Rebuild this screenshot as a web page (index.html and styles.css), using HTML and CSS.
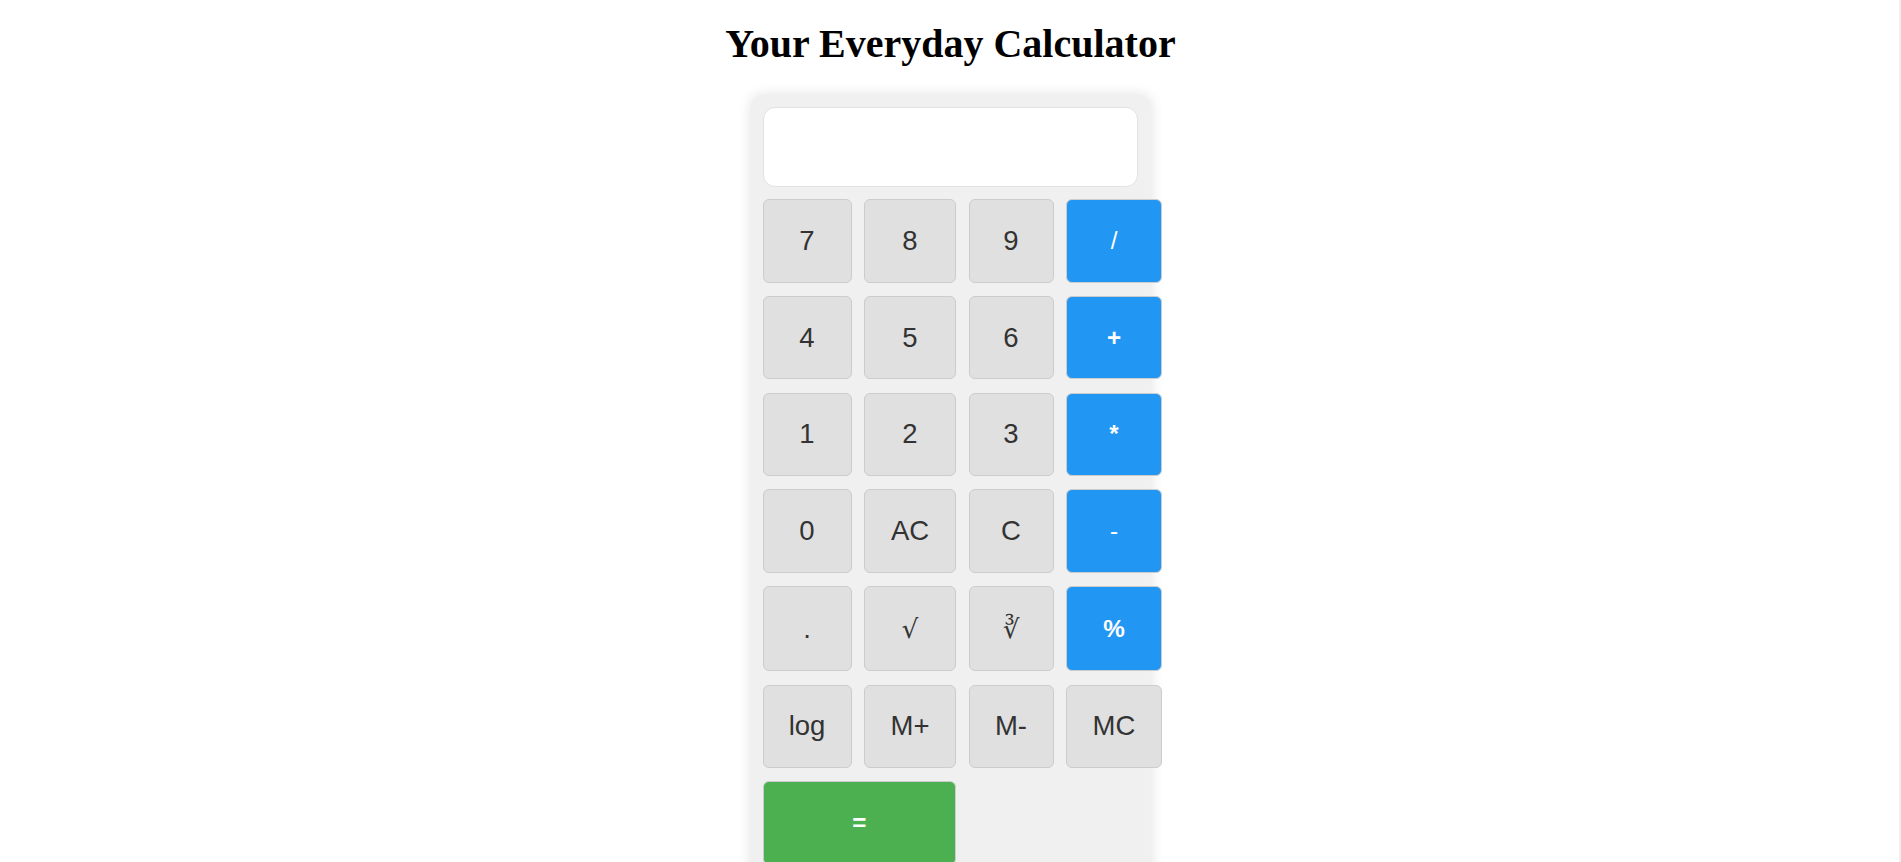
FILE: index.html
```html
<!DOCTYPE html>
<html lang="en">
<head>
<meta charset="utf-8">
<title>Your Everyday Calculator</title>
<link rel="stylesheet" href="styles.css">
</head>
<body>
<h1 class="title">Your Everyday Calculator</h1>
<div class="calculator">
  <div class="display"></div>
  <div class="keys">
    <button class="key">7</button>
    <button class="key">8</button>
    <button class="key">9</button>
    <button class="key op thin">/</button>
    <button class="key">4</button>
    <button class="key">5</button>
    <button class="key">6</button>
    <button class="key op">+</button>
    <button class="key">1</button>
    <button class="key">2</button>
    <button class="key">3</button>
    <button class="key op">*</button>
    <button class="key">0</button>
    <button class="key">AC</button>
    <button class="key">C</button>
    <button class="key op thin">-</button>
    <button class="key">.</button>
    <button class="key sym">&#8730;</button>
    <button class="key sym">&#8731;</button>
    <button class="key op">%</button>
    <button class="key">log</button>
    <button class="key">M+</button>
    <button class="key">M-</button>
    <button class="key">MC</button>
    <button class="key eq">=</button>
  </div>
</div>
<div class="edge"></div>
</body>
</html>
```
FILE: styles.css
```css
html, body {
  margin: 0;
  padding: 0;
  background: #ffffff;
  overflow: hidden;
}
body {
  font-family: "Liberation Sans", Arial, sans-serif;
}
.title {
  font-family: "Liberation Serif", "Times New Roman", serif;
  font-weight: bold;
  font-size: 40px;
  line-height: 46px;
  text-align: center;
  margin: 21px 0 28px 0;
  color: #000;
}
.calculator {
  box-sizing: border-box;
  width: 400px;
  margin: 0 auto;
  padding: 12px;
  background: #f0f0f0;
  border-radius: 12px;
  box-shadow: 0 0 14px rgba(0, 0, 0, 0.12);
}
.display {
  box-sizing: border-box;
  width: 375px;
  height: 80px;
  background: #ffffff;
  border: 1px solid #e2e2e2;
  border-radius: 12px;
  margin-bottom: 12.3px;
}
.keys {
  display: grid;
  grid-template-columns: 89px 92px 85px 96px;
  grid-template-rows: repeat(4, 83.3px) 85.3px repeat(2, 83.3px);
  column-gap: 12.5px;
  row-gap: 13.4px;
}
.key {
  box-sizing: border-box;
  margin: 0;
  padding: 0;
  background: #e0e0e0;
  border: 1px solid #cccccc;
  border-radius: 6px;
  color: #333333;
  font-family: "Liberation Sans", Arial, sans-serif;
  font-size: 27.5px;
}
.sym {
  font-family: "DejaVu Serif", "Liberation Serif", serif;
  font-size: 26px;
}
.op {
  background: #2196f3;
  color: #ffffff;
  font-weight: bold;
  font-size: 24.25px;
}
.thin {
  font-weight: normal;
}
.eq {
  grid-column: span 2;
  background: #4caf50;
  color: #ffffff;
  font-weight: bold;
  font-size: 24.25px;
}
.edge {
  position: fixed;
  top: 0;
  right: 0;
  width: 2px;
  height: 100%;
  background: #efefef;
}
```
